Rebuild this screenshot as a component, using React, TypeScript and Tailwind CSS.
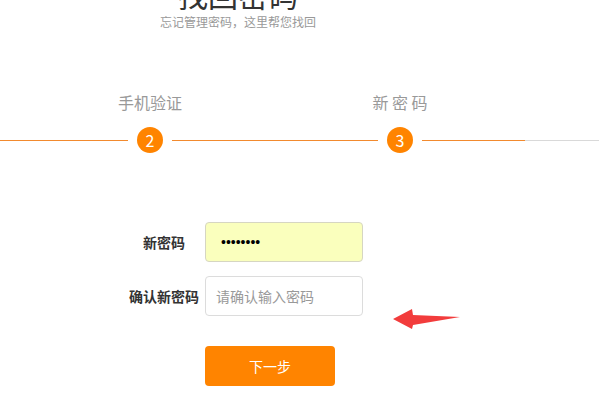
import React from 'react';

const steps = [
    { label: '身份验证', num: 1, active: true },
    { label: '手机验证', num: 2, active: true },
    { label: '新 密 码', num: 3, active: true },
    { label: '完成', num: 4, active: false },
];

function Step({ label, num, active }: { label: string; num: number; active: boolean }) {
    const line = active ? 'bg-[#f28a2e]' : 'bg-[#d9d9d9]';
    return (
        <div className="w-[250px] shrink-0 flex flex-col">
            <div className="text-center text-[16px] leading-[16px] text-[#999]">{label}</div>
            <div className="mt-[17px] h-[26px] flex items-center">
                <div className={`flex-1 h-px ${line}`} />
                <div
                    className={`w-[26px] h-[26px] mx-[9px] rounded-full flex items-center justify-center text-white text-[16px] ${
                        active ? 'bg-[#ff8400]' : 'bg-[#cccccc]'
                    }`}
                >
                    {num}
                </div>
                <div className={`flex-1 h-px ${line}`} />
            </div>
        </div>
    );
}

export default function App() {
    return (
        <div
            className="relative w-[599px] h-[400px] overflow-hidden bg-white"
            style={{ fontFamily: '"Noto Sans CJK SC", "Noto Sans", sans-serif' }}
        >
            {/* Header */}
            <div className="w-[476px] text-center">
                <h1 className="mt-[-21px] text-[30px] leading-[30px] text-[#333]">找回密码</h1>
                <p className="mt-[7px] text-[12px] leading-[12px] text-[#999]">忘记管理密码，这里帮您找回</p>
            </div>

            {/* Steps */}
            <div className="mt-[66px] ml-[-225px] flex">
                {steps.map((s) => (
                    <Step key={s.num} {...s} />
                ))}
            </div>

            {/* Form */}
            <div className="mt-[69px] ml-[123px] flex flex-col">
                <div className="flex items-center">
                    <label className="w-[82px] text-center text-[14px] font-bold text-[#333]">新密码</label>
                    <input
                        type="password"
                        defaultValue="12345678"
                        readOnly
                        className="w-[158px] h-[40px] pl-[15px] pr-[10px] rounded-[4px] border border-[#d6d6c2] bg-[#faffbd] font-['Liberation_Sans',Arial,sans-serif] text-[14px] text-black outline-none"
                    />
                </div>
                <div className="mt-[14px] flex items-center">
                    <label className="w-[82px] text-center text-[14px] font-bold text-[#333]">确认新密码</label>
                    <input
                        type="password"
                        placeholder="请确认输入密码"
                        className="w-[158px] h-[40px] px-[10px] rounded-[4px] border border-[#dcdcdc] bg-white text-[14px] placeholder:text-[#999] outline-none"
                    />
                </div>
                <button className="mt-[30px] ml-[82px] w-[130px] h-[40px] rounded-[4px] bg-[#ff8400] text-white text-[14px]">
                    下一步
                </button>
            </div>

            {/* annotation arrow */}
            <svg className="absolute left-[390px] top-[305px]" width="74" height="28" viewBox="0 0 74 28">
                <polygon points="3,14 22,4 23,10 70,12 23,20 22,24" fill="#f23c3c" />
            </svg>
        </div>
    );
}
